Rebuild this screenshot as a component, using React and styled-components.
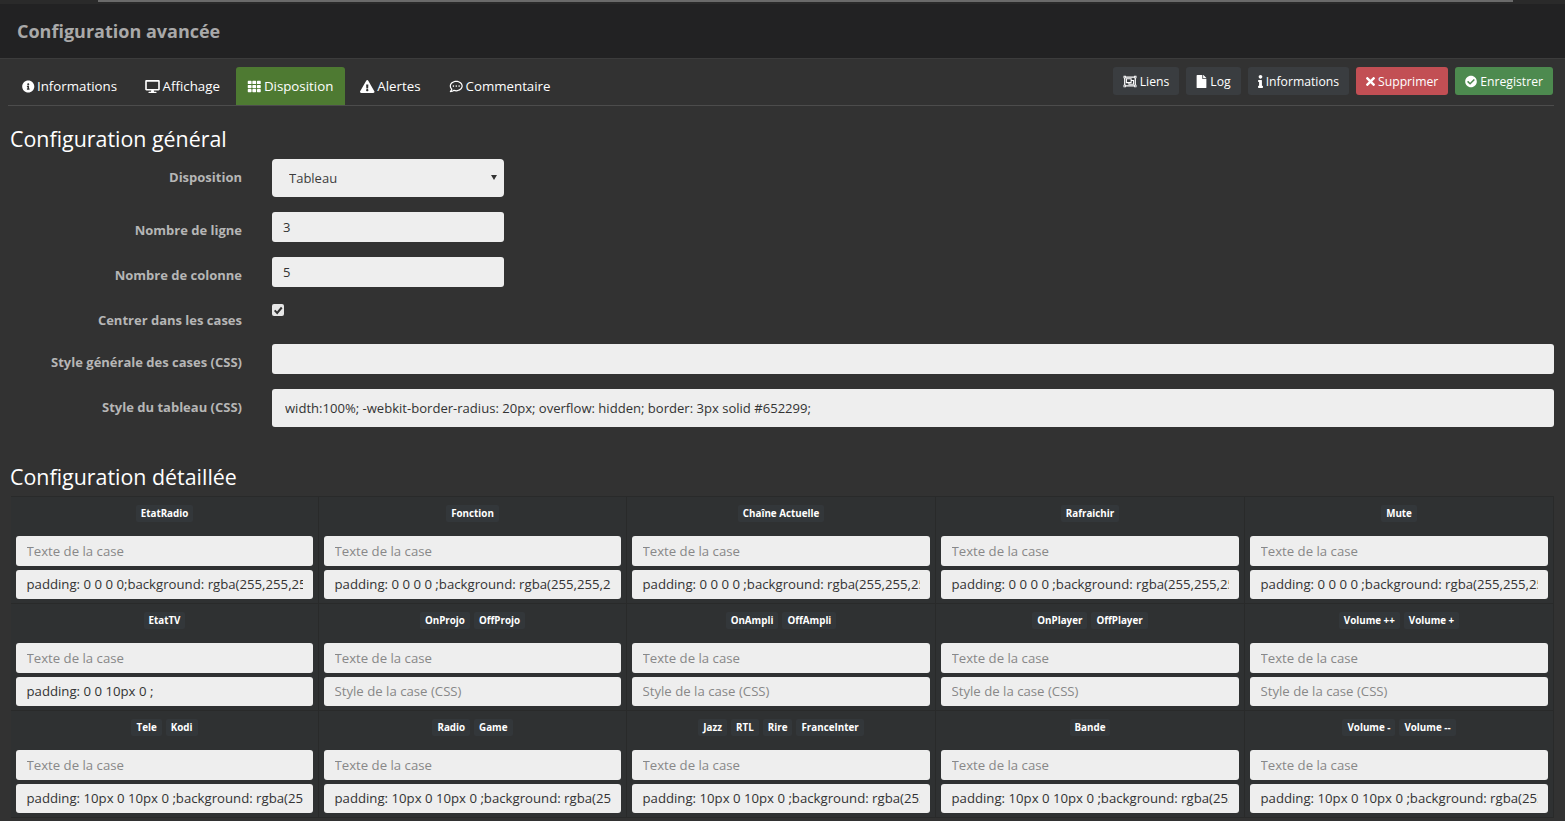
import React from "react";
import styled, { createGlobalStyle } from "styled-components";
import {
  FaInfoCircle,
  FaDesktop,
  FaTh,
  FaExclamationTriangle,
  FaRegCommentDots,
  FaRegObjectGroup,
  FaFile,
  FaInfo,
  FaTimes,
  FaCheckCircle,
} from "react-icons/fa";

const GlobalStyle = createGlobalStyle`
  html, body {
    margin: 0;
    padding: 0;
    height: 100%;
    overflow: hidden;
    background: #323232;
    font-family: "Open Sans", sans-serif;
    font-size: 13px;
    color: #fff;
  }
  * { box-sizing: border-box; }
`;

const tabs = [
  { label: "Informations", icon: <FaInfoCircle />, w: 12.5 },
  { label: "Affichage", icon: <FaDesktop />, w: 15 },
  { label: "Disposition", icon: <FaTh />, w: 14.5, active: true },
  { label: "Alertes", icon: <FaExclamationTriangle />, w: 14.5 },
  { label: "Commentaire", icon: <FaRegCommentDots />, w: 14.5 },
];

const actions = [
  { label: "Liens", icon: <FaRegObjectGroup />, w: 14, kind: "default" },
  { label: "Log", icon: <FaFile />, w: 11, kind: "default" },
  { label: "Informations", icon: <FaInfo />, w: 5, kind: "default" },
  { label: "Supprimer", icon: <FaTimes />, w: 9, kind: "danger" },
  { label: "Enregistrer", icon: <FaCheckCircle />, w: 12, kind: "success" },
];

const bg = "padding: 0 0 0 0 ;background: rgba(255,255,255,0.1);";
const big = "padding: 10px 0 10px 0 ;background: rgba(255,255,255,0.1);";

const cells = [
  { chips: ["EtatRadio"], css: "padding: 0 0 0 0;background: rgba(255,255,255,0.1);" },
  { chips: ["Fonction"], css: bg },
  { chips: ["Chaîne Actuelle"], css: bg },
  { chips: ["Rafraichir"], css: bg },
  { chips: ["Mute"], css: bg },
  { chips: ["EtatTV"], css: "padding: 0 0 10px 0 ;" },
  { chips: ["OnProjo", "OffProjo"], css: "" },
  { chips: ["OnAmpli", "OffAmpli"], css: "" },
  { chips: ["OnPlayer", "OffPlayer"], css: "" },
  { chips: ["Volume ++", "Volume +"], css: "" },
  { chips: ["Tele", "Kodi"], css: big },
  { chips: ["Radio", "Game"], css: big },
  { chips: ["Jazz", "RTL", "Rire", "FranceInter"], css: big },
  { chips: ["Bande"], css: big },
  { chips: ["Volume -", "Volume --"], css: big },
];

export default function App() {
  return (
    <Page>
      <GlobalStyle />
      <TopStrip>
        <TopLine />
      </TopStrip>
      <Header>
        <Title>Configuration avancée</Title>
      </Header>
      <Content>
        <TabBar>
          <Tabs>
            {tabs.map((t) => (
              <Tab key={t.label} $active={t.active}>
                <Icon $w={t.w}>{t.icon}</Icon>
                {t.label}
              </Tab>
            ))}
          </Tabs>
          <Actions>
            {actions.map((a) => (
              <ActionBtn key={a.label} $kind={a.kind}>
                <Icon $w={a.w}>{a.icon}</Icon>
                {a.label}
              </ActionBtn>
            ))}
          </Actions>
        </TabBar>

        <SectionTitle>Configuration général</SectionTitle>
        <FormRow>
          <Label>Disposition</Label>
          <SelectWrap>
            <Select defaultValue="Tableau">
              <option>Tableau</option>
            </Select>
          </SelectWrap>
        </FormRow>
        <FormRow>
          <Label>Nombre de ligne</Label>
          <ShortInput readOnly value="3" />
        </FormRow>
        <FormRow>
          <Label>Nombre de colonne</Label>
          <ShortInput readOnly value="5" />
        </FormRow>
        <CheckRow>
          <Label>Centrer dans les cases</Label>
          <CheckBox>
            <svg viewBox="0 0 12 12" width="10" height="10">
              <path d="M2 6.5 L5 9.5 L10.5 3" fill="none" stroke="#333" strokeWidth="2.4" />
            </svg>
          </CheckBox>
        </CheckRow>
        <FormRow>
          <Label>Style générale des cases (CSS)</Label>
          <Input readOnly value="" />
        </FormRow>
        <FormRow>
          <Label>Style du tableau (CSS)</Label>
          <TallInput
            readOnly
            value="width:100%; -webkit-border-radius: 20px; overflow: hidden; border: 3px solid #652299;"
          />
        </FormRow>

        <DetailTitle>Configuration détaillée</DetailTitle>
        <Table>
          {cells.map((c, i) => (
            <Cell key={i}>
              <Chips>
                {c.chips.map((name) => (
                  <Chip key={name}>{name}</Chip>
                ))}
              </Chips>
              <CellInput placeholder="Texte de la case" readOnly />
              <CellInput placeholder="Style de la case (CSS)" readOnly value={c.css} />
            </Cell>
          ))}
        </Table>
      </Content>
    </Page>
  );
}

const Page = styled.div`
  width: 1565px;
  height: 821px;
  overflow: hidden;
`;
const TopStrip = styled.div`
  height: 4px;
  background: #2a2a2a;
  padding: 0 52px 0 98px;
`;
const TopLine = styled.div`
  height: 2px;
  background: #6a6a6a;
`;
const Header = styled.header`
  height: 55px;
  background: #222223;
  border-bottom: 1px solid #3c3c3c;
  padding: 0 17px;
  display: flex;
  align-items: center;
`;
const Title = styled.h1`
  margin: 0;
  font-size: 18px;
  font-weight: 700;
  color: #a9a9a9;
`;
const Content = styled.main`
  padding: 8px 11px 0 8px;
`;
const TabBar = styled.div`
  height: 39px;
  display: flex;
  justify-content: space-between;
  border-bottom: 1px solid #4c4c4c;
`;
const Tabs = styled.nav`
  display: flex;
`;
const Tab = styled.a`
  height: 38px;
  margin: ${(p) => (p.$active ? "0 1px 0 2px" : "0")};
  padding: ${(p) => (p.$active ? "0 12px 0 11px" : "0 14px")};
  display: flex;
  align-items: center;
  gap: 2.5px;
  font-size: 13.3px;
  color: #fff;
  background: ${(p) => (p.$active ? "#4e7a32" : "transparent")};
  border-radius: 3px 3px 0 0;
`;
const Icon = styled.span`
  flex: none;
  display: flex;
  width: ${(p) => p.$w}px;
  height: 13px;
  svg {
    width: 100%;
    height: 100%;
  }
`;
const Actions = styled.div`
  display: flex;
  gap: 7px;
  margin-right: 1px;
`;
const ActionBtn = styled.button`
  height: 28px;
  padding: 0 10px;
  display: flex;
  align-items: center;
  gap: 3px;
  border: none;
  border-radius: 3px;
  font: 12.2px "Open Sans", sans-serif;
  color: #fff;
  background: ${(p) =>
    p.$kind === "danger" ? "#c24f54" : p.$kind === "success" ? "#4d8a4f" : "#3a3d40"};
`;
const SectionTitle = styled.h2`
  margin: 18px 0 0 2px;
  height: 35px;
  line-height: 30px;
  font-size: 21.4px;
  font-weight: 400;
  color: #fff;
`;
const FormRow = styled.div`
  display: grid;
  grid-template-columns: 234px 1fr;
  column-gap: 30px;
  margin-bottom: 15px;
`;
const CheckRow = styled(FormRow)`
  height: 27px;
`;
const Label = styled.label`
  padding-top: 9px;
  text-align: right;
  font-size: 13px;
  line-height: 18px;
  font-weight: 700;
  color: #b6b6b6;
`;
const SelectWrap = styled.div`
  position: relative;
  width: 232px;
  &::after {
    content: "";
    position: absolute;
    right: 7px;
    top: 16px;
    border: 3.5px solid transparent;
    border-top: 5px solid #333;
    border-bottom: none;
  }
`;
const Select = styled.select`
  width: 100%;
  height: 38px;
  padding: 0 17px;
  appearance: none;
  border: none;
  border-radius: 4px;
  background: #eee;
  font: 13px "Open Sans", sans-serif;
  color: #3c3c3c;
`;
const Input = styled.input`
  display: block;
  width: 100%;
  height: 30px;
  padding: 0 11px;
  border: none;
  outline: none;
  border-radius: 3px;
  background: #eee;
  font: 13px "Open Sans", sans-serif;
  color: #333;
  &::placeholder {
    color: #888;
    opacity: 1;
  }
`;
const ShortInput = styled(Input)`
  width: 232px;
`;
const TallInput = styled(Input)`
  height: 38px;
  padding: 0 13px;
  font-size: 13.07px;
`;
const CheckBox = styled.span`
  width: 12px;
  height: 12px;
  margin-top: 2px;
  display: flex;
  align-items: center;
  justify-content: center;
  border-radius: 2px;
  background: #e6e6e6;
`;
const DetailTitle = styled(SectionTitle)`
  margin-top: 35px;
  height: 34px;
`;
const Table = styled.section`
  margin-left: 3px;
  display: grid;
  grid-template-columns: 308px 308px 309px 309px 309px;
  border-top: 1px solid #292a2a;
`;
const Cell = styled.div`
  height: 107px;
  padding: 8px 5px 0;
  background: #2f3132;
  border-right: 1px solid #292a2a;
  border-bottom: 1px solid #292a2a;
`;
const Chips = styled.div`
  height: 31px;
  display: flex;
  justify-content: center;
  align-items: flex-start;
  gap: 4px;
`;
const Chip = styled.span`
  height: 17px;
  padding: 0 5px;
  border-radius: 2px;
  background: #33373a;
  font-size: 9.8px;
  line-height: 17px;
  font-weight: 700;
  color: #fff;
  white-space: nowrap;
`;
const CellInput = styled(Input)`
  height: 29.5px;
  margin-bottom: 4px;
  padding: 0 10px 0 10.5px;
  font-size: 13.2px;
`;
